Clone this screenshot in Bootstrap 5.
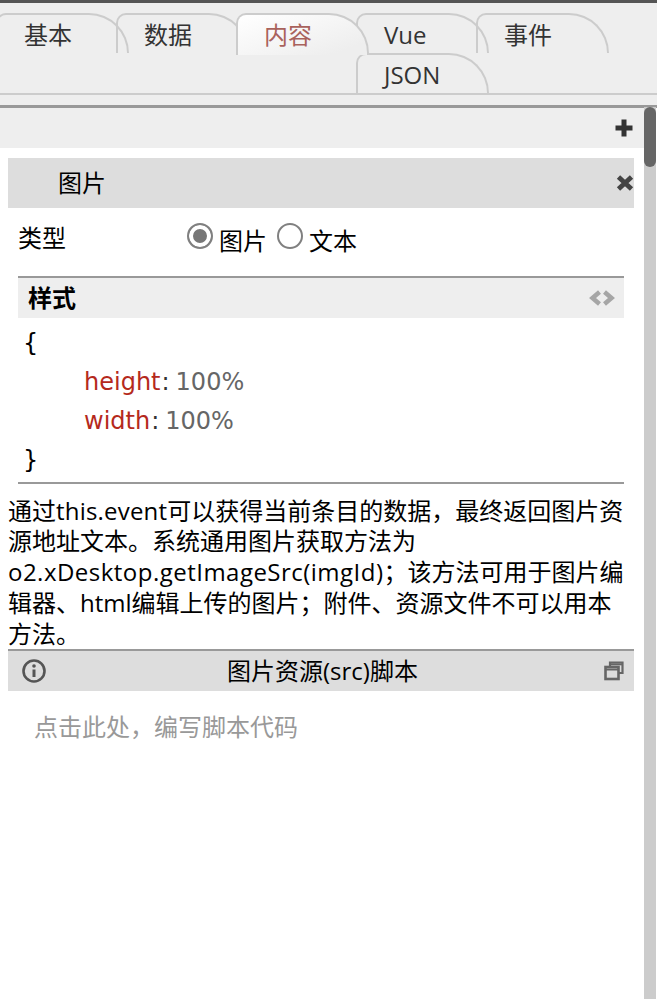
<!DOCTYPE html>
<html lang="zh-CN">
<head>
    <meta charset="UTF-8">
    <meta name="viewport" content="width=device-width, initial-scale=1.0">
    <title>图片</title>
    <link href="https://cdn.jsdelivr.net/npm/bootstrap@5.3.0/dist/css/bootstrap.min.css" rel="stylesheet">
    <style>
        html, body {
            height: 999px;
            overflow: hidden;
        }
        body {
            font-family: "Open Sans", "Noto Sans CJK SC", sans-serif;
            font-size: 24px;
            line-height: 30.75px;
            color: #000;
            background: #fff;
        }
        .tab-area {
            background: #eee;
            border-top: 3px solid #555;
            padding-top: 10px;
            height: 108px;
            border-bottom: 3px solid #999;
        }
        .tab-strip {
            height: 82px;
            border-bottom: 2px solid #ccc;
        }
        .tab-item {
            width: 133px;
            height: 40px;
            margin-right: -13px;
            padding-left: 26px;
            border: 2px solid #ccc;
            border-bottom: 0;
            border-radius: 10px 40px 0 0;
            color: #333;
            line-height: 39px;
            position: relative;
        }
        .tab-item:first-child {
            margin-left: -4px;
        }
        .tab-item.is-active {
            height: 42px;
            color: #a9625c;
            background: linear-gradient(160deg, #fff, #eee 85%);
            z-index: 2;
        }
        .work-row {
            height: 891px;
        }
        .work-main {
            width: 644px;
        }
        .tool-row {
            height: 40px;
            background: #eee;
            padding-right: 10px;
        }
        .side-track {
            width: 12px;
            background: #ccc;
            margin-top: -1px;
            margin-right: 1px;
        }
        .side-thumb {
            height: 60px;
            background: #666;
            border-radius: 6px;
        }
        .panel-wrap {
            margin: 10px 10px 0 8px;
        }
        .panel-head {
            height: 50px;
            background: #ddd;
            padding-left: 50px;
            padding-right: 0;
        }
        .type-row {
            height: 68px;
            padding: 15px 10px 0;
        }
        .type-label {
            width: 169px;
        }
        .type-row .form-check-input {
            width: 26px;
            height: 26px;
            margin: 0;
            border: 2px solid #808080;
            background: #fff;
            flex: none;
        }
        .type-row .form-check-input:checked {
            background: #777;
            background-image: none;
            box-shadow: inset 0 0 0 4px #fff;
        }
        .radio-text {
            margin: 3px 0 0 6px;
        }
        .radio-pair + .radio-pair {
            margin-left: 10px;
        }
        .style-head {
            height: 42px;
            margin: 0 10px;
            border-top: 2px solid #999;
            background: #eee;
            padding: 0 9px 0 10px;
        }
        .style-head b {
            font-weight: 700;
        }
        .code-box {
            margin: 0 10px;
            padding: 6px 6px 3px 5px;
            height: 166px;
            border-bottom: 2px solid #999;
            font-family: "DejaVu Sans", sans-serif;
            line-height: 39px;
        }
        .code-line {
            padding-left: 61px;
            color: #666;
        }
        .code-key {
            color: #b5291c;
        }
        .code-sep {
            color: #333;
            margin: 0 6px 0 1px;
        }
        .help-text {
            margin: 11.5px 0 0;
            height: 153.5px;
            white-space: nowrap;
        }
        .latin-one {
            letter-spacing: .2px;
        }
        .latin-two {
            letter-spacing: .48px;
        }
        .script-head {
            height: 42px;
            border-top: 2px solid #999;
            background: #ddd;
            padding: 0 10px 0 13px;
        }
        .script-title {
            flex: 1;
            text-align: center;
            margin-right: 6px;
        }
        .script-hint {
            padding: 21px 26px;
            color: #999;
        }
    </style>
</head>
<body>
    <div class="tab-area">
        <div class="tab-strip">
            <div class="tab-item float-start">基本</div>
            <div class="tab-item float-start">数据</div>
            <div class="tab-item float-start is-active">内容</div>
            <div class="tab-item float-start">Vue</div>
            <div class="tab-item float-start">事件</div>
            <div class="tab-item float-start">JSON</div>
        </div>
    </div>

    <div class="work-row d-flex justify-content-between">
        <div class="work-main">
            <div class="tool-row d-flex align-items-center justify-content-end">
                <svg width="20" height="20" viewBox="0 0 20 20"><path d="M10 1.500v17M1.500 10h17" stroke="#333" stroke-width="5" fill="none"/></svg>
            </div>

            <div class="panel-wrap">
                <div class="panel-head d-flex align-items-center justify-content-between">
                    <span>图片</span>
                    <svg width="18" height="18" viewBox="0 0 18 18"><path d="M2.500 3l13 12M15.500 3l-13 12" stroke="#444" stroke-width="4.800" fill="none"/></svg>
                </div>

                <div class="type-row d-flex align-items-start">
                    <div class="type-label">类型</div>
                    <div class="radio-pair d-flex align-items-start">
                        <input class="form-check-input" type="radio" name="imgType" checked>
                        <span class="radio-text">图片</span>
                    </div>
                    <div class="radio-pair d-flex align-items-start">
                        <input class="form-check-input" type="radio" name="imgType">
                        <span class="radio-text">文本</span>
                    </div>
                </div>

                <div class="style-head d-flex align-items-center justify-content-between">
                    <b>样式</b>
                    <svg width="26" height="16" viewBox="0 0 26 16"><path d="M10.500 2L3.500 8l7 6M15.500 2l7 6-7 6" stroke="#a6a6a6" stroke-width="4.500" fill="none"/></svg>
                </div>
                <div class="code-box">
                    <div>{</div>
                    <div class="code-line"><span class="code-key">height</span><span class="code-sep">:</span>100%</div>
                    <div class="code-line"><span class="code-key">width</span><span class="code-sep">:</span>100%</div>
                    <div>}</div>
                </div>

                <div class="help-text">
                    <div>通过<span class="latin-one">this.event</span>可以获得当前条目的数据，最终返回图片资</div>
                    <div>源地址文本。系统通用图片获取方法为</div>
                    <div><span class="latin-two">o2.xDesktop.getImageSrc(imgId)</span>；该方法可用于图片编</div>
                    <div>辑器、html编辑上传的图片；附件、资源文件不可以用本</div>
                    <div>方法。</div>
                </div>

                <div class="script-head d-flex align-items-center">
                    <svg width="26" height="26" viewBox="0 0 26 26"><circle cx="13" cy="13" r="10.500" stroke="#555" stroke-width="2.600" fill="none"/><circle cx="13" cy="8" r="1.800" fill="#555"/><path d="M13 11.500v7.500" stroke="#555" stroke-width="3" fill="none"/></svg>
                    <span class="script-title">图片资源(src)脚本</span>
                    <svg width="20" height="20" viewBox="0 0 20 20"><path d="M6 5V1.500h12.500V12H15" stroke="#666" stroke-width="2.200" fill="none"/><path d="M6 3.300h12.500" stroke="#666" stroke-width="2" fill="none"/><rect x="1.500" y="6" width="13" height="12" stroke="#666" stroke-width="2.600" fill="none"/><path d="M1.500 8.500h13" stroke="#666" stroke-width="2" fill="none"/></svg>
                </div>
                <div class="script-hint">点击此处，编写脚本代码</div>
            </div>
        </div>
        <div class="side-track">
            <div class="side-thumb"></div>
        </div>
    </div>

    <script src="https://cdn.jsdelivr.net/npm/bootstrap@5.3.0/dist/js/bootstrap.bundle.min.js"></script>
</body>
</html>
